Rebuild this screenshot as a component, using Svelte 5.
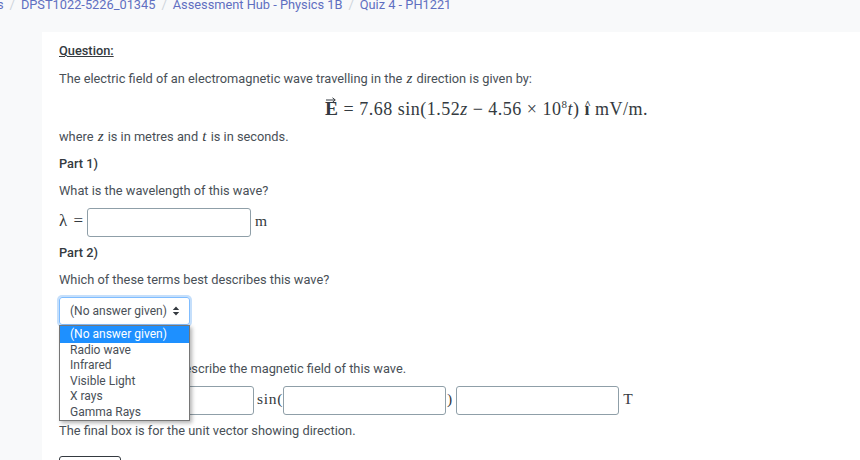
<script>
	const options = ['(No answer given)', 'Radio wave', 'Infrared', 'Visible Light', 'X rays', 'Gamma Rays'];
	const crumbs = ['DPST1022-5226_01345', 'Assessment Hub - Physics 1B', 'Quiz 4 - PH1221'];
</script>

<div class="page">
	<nav class="crumbs">
		<span class="cut">s</span>
		{#each crumbs as crumb}
			<span class="sep">/</span>
			<a href="#top">{crumb}</a>
		{/each}
	</nav>

	<main class="card">
		<p class="title"><b><u>Question:</u></b></p>
		<p>The electric field of an electromagnetic wave travelling in the <i class="m">z</i> direction is given by:</p>
		<div class="equation">
			<span class="vec"
				><svg width="10" height="6" viewBox="0 0 10 6"><path d="M0 3h9M6.5 .8 9.3 3 6.5 5.2" fill="none" stroke="#343a40" stroke-width="1" /></svg><b>E</b></span
			> = 7.68 sin(1.52<i>z</i> − 4.56 × 10<sup>8</sup><i>t</i>) <span class="hat"><b>ı</b></span> mV/m.
		</div>
		<p>where <i class="m">z</i> is in metres and <i class="m">t</i> is in seconds.</p>
		<p class="part"><b>Part 1)</b></p>
		<p>What is the wavelength of this wave?</p>
		<div class="answer">
			<span class="m lambda">λ =</span>
			<span class="box short"></span>
			<span class="m">m</span>
		</div>
		<p class="part"><b>Part 2)</b></p>
		<p>Which of these terms best describes this wave?</p>

		<div class="select-wrap">
			<div class="select">
				(No answer given)
				<svg width="8" height="10" viewBox="0 0 8 10"><path d="M4 0.5 7.2 4H.8zM4 9.5.8 6h6.4z" fill="#343a40" /></svg>
			</div>
			<ul class="menu">
				{#each options as option, i}
					<li class:active={i === 0}>{option}</li>
				{/each}
			</ul>
		</div>

		<p class="part3">Use your answers to describe the magnetic field of this wave.</p>
		<div class="answer field">
			<span class="box first"></span>
			<span class="m sin">sin(</span>
			<span class="box mid"></span>
			<span class="m paren">)</span>
			<span class="box mid"></span>
			<span class="m unit">T</span>
		</div>
		<p class="note">The final box is for the unit vector showing direction.</p>
		<div class="check"></div>
	</main>
</div>

<style>
	:global(body) {
		margin: 0;
		overflow: hidden;
		background: #f8f9fa;
	}

	.page {
		width: 860px;
		height: 460px;
		overflow: hidden;
		font-family: Roboto, "Liberation Sans", sans-serif;
		font-size: 12.8px;
		line-height: 20px;
		color: #495057;
	}

	.crumbs {
		display: flex;
		gap: 6px;
		margin: -5px 0 0 -3px;
		height: 37px;
		color: #ced4da;
	}

	.crumbs a {
		color: #5f6fc1;
		text-decoration: none;
	}

	.cut {
		color: #5f6fc1;
	}

	.card {
		margin-left: 42px;
		padding: 9px 17px 0;
		height: 428px;
		background: #fff;
	}

	p {
		margin: 0 0 7px;
	}

	.title {
		color: #343a40;
		margin-bottom: 8px;
	}

	b {
		font-weight: 500;
		color: #343a40;
	}

	.part {
		margin-bottom: 7px;
	}

	.m,
	.equation {
		font-family: "Liberation Serif", serif;
	}

	.equation {
		height: 29px;
		margin: -2px 0 4px;
		padding-left: 266px;
		font-size: 18px;
		line-height: 29px;
		color: #343a40;
		letter-spacing: 0.5px;
	}

	.equation b {
		font-weight: 700;
	}

	.vec b {
		font-size: 19.5px;
	}

	.equation sup {
		font-size: 11px;
		line-height: 0;
	}

	.vec,
	.hat {
		position: relative;
		display: inline-block;
	}

	.vec svg {
		position: absolute;
		left: 1px;
		top: 3px;
	}

	.hat::before {
		content: "^";
		position: absolute;
		left: 0;
		top: -5px;
		font-size: 11px;
		font-weight: 700;
	}

	.answer {
		display: flex;
		align-items: center;
		gap: 4px;
		height: 29px;
		margin-bottom: 6px;
	}

	.m {
		font-size: 15.5px;
		color: #343a40;
	}

	.answer .m {
		margin-bottom: 4px;
	}

	p .m {
		font-size: 15px;
		line-height: 0;
		margin: 0 1px;
	}

	.lambda {
		font-size: 17px;
		white-space: pre;
		word-spacing: 2px;
	}

	.box {
		box-sizing: border-box;
		display: block;
		height: 29px;
		border: 1px solid #8f9fa8;
		border-radius: 3px;
		background: #fff;
	}

	.short {
		width: 164px;
	}

	.select-wrap {
		position: relative;
		height: 28px;
		margin-top: 3px;
	}

	.select {
		box-sizing: border-box;
		display: flex;
		align-items: center;
		gap: 5px;
		width: 131px;
		height: 28px;
		padding-left: 10px;
		border: 1px solid #80bdff;
		border-radius: 3px;
		box-shadow: 0 0 0 2px #c5dffb;
		font-size: 12px;
		white-space: nowrap;
	}

	.menu {
		position: absolute;
		left: 0;
		top: 28px;
		z-index: 2;
		box-sizing: border-box;
		width: 131px;
		margin: 0;
		padding: 0;
		list-style: none;
		background: #fff;
		border: 1px solid #767676;
		box-shadow: 2px 2px 4px rgba(0, 0, 0, 0.3);
		font-size: 12px;
		line-height: 15.5px;
	}

	.menu li {
		padding-left: 10px;
	}

	.menu .active {
		padding-top: 1px;
		background: #1e90ff;
		color: #fff;
	}

	.part3 {
		margin: 34px 0 7px;
	}

	.field {
		gap: 3px;
		margin-bottom: 6px;
	}

	.first {
		width: 195px;
	}

	.mid {
		width: 163px;
	}

	.sin {
		margin-right: -3px;
		letter-spacing: 0.7px;
	}

	.paren {
		margin: 0 1px 4px -2px;
	}

	.unit {
		margin-left: 1px;
	}

	.check {
		width: 60px;
		height: 20px;
		margin-top: 15px;
		border: 1px solid #343a40;
		border-radius: 3px;
	}
</style>
